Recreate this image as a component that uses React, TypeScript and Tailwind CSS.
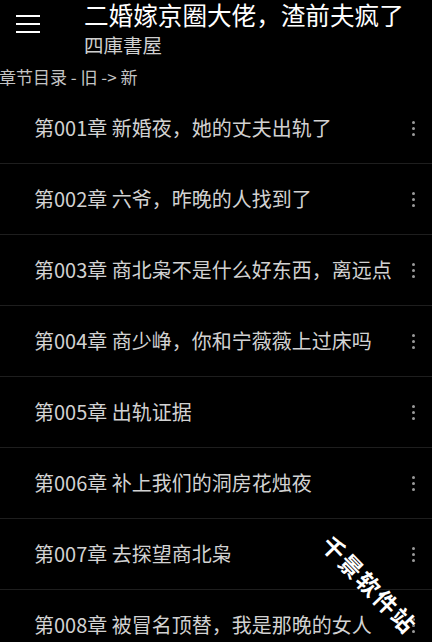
import React from 'react';

const chapters = [
  '第001章 新婚夜，她的丈夫出轨了',
  '第002章 六爷，昨晚的人找到了',
  '第003章 商北枭不是什么好东西，离远点',
  '第004章 商少峥，你和宁薇薇上过床吗',
  '第005章 出轨证据',
  '第006章 补上我们的洞房花烛夜',
  '第007章 去探望商北枭',
  '第008章 被冒名顶替，我是那晚的女人',
];

function MoreDots() {
  return (
    <div className="flex flex-col items-center gap-[3px]">
      <span className="block w-[3px] h-[3px] rounded-full bg-[#9a9a9a]" />
      <span className="block w-[3px] h-[3px] rounded-full bg-[#9a9a9a]" />
      <span className="block w-[3px] h-[3px] rounded-full bg-[#9a9a9a]" />
    </div>
  );
}

export default function App() {
  return (
    <div
      className="relative w-[432px] h-[642px] overflow-hidden bg-black text-white"
      style={{ fontFamily: '"Noto Sans CJK SC", "Noto Sans", sans-serif' }}
    >
      {/* Header */}
      <div className="flex h-[60px]">
        <div className="w-[84px] pl-[16px] pt-[15px] flex flex-col gap-[6px]">
          <span className="block w-[24px] h-[2px] bg-white" />
          <span className="block w-[24px] h-[2px] bg-white" />
          <span className="block w-[24px] h-[2px] bg-white" />
        </div>
        <div className="flex flex-col">
          <h1 className="text-[24.6px] leading-[28px] text-white font-normal whitespace-nowrap">
            二婚嫁京圈大佬，渣前夫疯了
          </h1>
          <p className="mt-[5px] text-[19.5px] leading-[24px] text-[#cfcfcf] whitespace-nowrap">四庫書屋</p>
        </div>
      </div>

      {/* Section label */}
      <div className="h-[33px] flex items-center">
        <span className="text-[17px] text-[#c4c4c4] -ml-[1px] whitespace-nowrap">章节目录 - 旧 -&gt; 新</span>
      </div>

      {/* Chapter list */}
      <div>
        {chapters.map((c) => (
          <div key={c} className="h-[71px] flex items-center border-b border-[#1e1e1e]">
            <span className="flex-1 pl-[34px] text-[20px] text-[#d2d2d2] whitespace-nowrap">{c}</span>
            <div className="w-[24px] mr-[7px] flex justify-center">
              <MoreDots />
            </div>
          </div>
        ))}
      </div>

      {/* Watermark */}
      <div
        className="absolute left-[370px] top-[584px] -translate-x-1/2 -translate-y-1/2 rotate-[46deg] text-[23px] leading-[26px] font-bold tracking-[2px] text-white whitespace-nowrap"
        style={{ textShadow: '0 0 2px #000, 0 0 2px #000' }}
      >
        千景软件站
      </div>
    </div>
  );
}
